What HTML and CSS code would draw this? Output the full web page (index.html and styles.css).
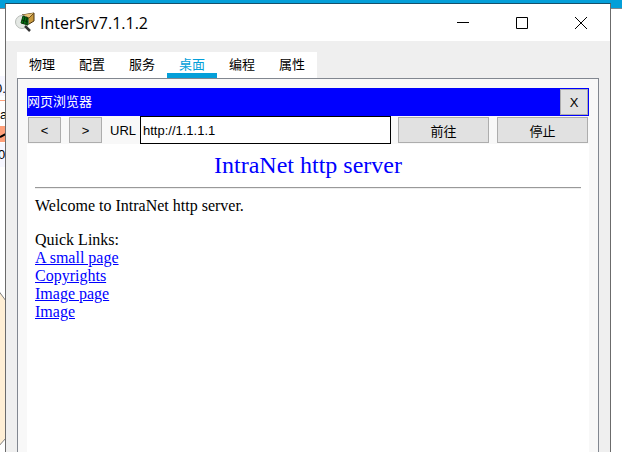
FILE: index.html
```html
<!DOCTYPE html>
<html lang="zh-CN">
<head>
<meta charset="utf-8">
<title>InterSrv7.1.1.2</title>
<link rel="stylesheet" href="styles.css">
</head>
<body>
<div class="desktop">
  <svg class="canvas" width="6" height="452" viewBox="0 0 6 452" aria-hidden="true">
    <path fill="#f7f7ff" d="M0 76h6v20H0zM0 143h6v24H0z"/>
    <path fill="#ffa07a" d="M0 100h6v1H0zM0 126h6v16H0z"/>
    <path d="M0 137l6-3" stroke="#000" stroke-width="2"/>
    <text class="node-label" x="-5" y="93">0.</text>
    <text class="node-label" x="0" y="119">a</text>
    <text class="node-label" x="-2" y="159">0</text>
    <path d="M-2 290L6 301V438L-2 447" fill="#ffefd5" stroke="#808080"/>
  </svg>
  <main class="window">
    <header class="titlebar">
      <svg class="app-icon" width="20" height="22" viewBox="0 0 20 22" aria-hidden="true">
        <path d="M7 3L19 1V9L14 12L7 10z" fill="#c99a3d" stroke="#4c3512"/>
        <path d="M7 3L14 6L19 1" fill="#e8c477" stroke="#70501f"/>
        <circle cx="7" cy="10" r="6.500" fill="#e4e8e4" stroke="#b8bcb8"/>
        <path d="M8 4L13 6V13L6 11z" fill="#087a16" stroke="#063b09"/>
        <path d="M10 5L8 12M12 6L11 12M7 8L13 10" stroke="#032b06"/>
        <path d="M10 14L15 19" stroke="#333" stroke-width="2.500"/>
      </svg>
      <h1 class="title">InterSrv7.1.1.2</h1>
      <div class="controls">
        <button class="control" aria-label="最小化"><svg width="12" height="12"><path d="M0 5.500h12"/></svg></button>
        <button class="control" aria-label="最大化"><svg width="12" height="12"><path d="M.5.500h11v11H.5z"/></svg></button>
        <button class="control" aria-label="关闭"><svg width="12" height="12"><path d="M0 0l12 12M12 0L0 12"/></svg></button>
      </div>
    </header>
    <nav class="tabs">
      <button class="tab">物理</button>
      <button class="tab">配置</button>
      <button class="tab">服务</button>
      <button class="tab active">桌面</button>
      <button class="tab">编程</button>
      <button class="tab">属性</button>
    </nav>
    <section class="panel">
      <div class="browser">
        <div class="browser-title">
          <h2 class="browser-name">网页浏览器</h2>
          <button class="btn close" aria-label="关闭浏览器">X</button>
        </div>
        <form class="toolbar">
          <button class="btn step" type="button">&lt;</button>
          <button class="btn step" type="button">&gt;</button>
          <div class="address">
            <label class="url-label" for="url">URL</label>
            <input class="url" id="url" type="text" value="http://1.1.1.1">
          </div>
          <button class="btn action" type="button">前往</button>
          <button class="btn action" type="button">停止</button>
        </form>
        <article class="page">
          <h3 class="page-title">IntraNet http server</h3>
          <hr class="rule">
          <p class="text">Welcome to IntraNet http server.</p>
          <p class="text">Quick Links:<br>
            <a href="#small">A small page</a><br>
            <a href="#copyrights">Copyrights</a><br>
            <a href="#image-page">Image page</a><br>
            <a href="#image">Image</a></p>
        </article>
      </div>
    </section>
  </main>
</div>
</body>
</html>
```
FILE: styles.css
```css
* { box-sizing: border-box; }

body {
  margin: 0;
  font-family: "Liberation Sans", "Noto Sans CJK SC", sans-serif;
  font-size: 13px;
  color: #000;
}

button, input { font: inherit; color: inherit; border-radius: 0; }

.desktop {
  position: relative;
  display: flex;
  height: 100vh;
  padding: 3px 11px 0 5px;
  overflow: hidden;
  background: linear-gradient(#049fd9 8px, #808890 8px, #808890 9px, #fff 9px);
}

.canvas { position: absolute; left: 0; top: 0; }
.node-label { font-size: 13px; }

.window {
  position: relative;
  flex: 1;
  min-width: 0;
  display: flex;
  flex-direction: column;
  background: #efefef;
  border: 1px solid #6b6b6b;
  border-top-color: #17506a;
  border-bottom: 0;
}

.titlebar {
  display: flex;
  align-items: center;
  height: 37px;
  padding-left: 9px;
  background: #fff;
}

.app-icon { flex: none; }

.title {
  flex: 1;
  margin: 0 0 0 5px;
  font: 16px/24px "Open Sans", "Noto Sans", sans-serif;
}

.controls { display: flex; }

.control {
  display: flex;
  align-items: center;
  justify-content: center;
  width: 59px;
  height: 36px;
  padding: 0;
  border: 0;
  background: none;
}

.control svg { fill: none; stroke: #000; }

.tabs { display: flex; margin: 11px 0 0 11px; }

.tab {
  width: 50px;
  height: 26px;
  padding: 4px 0 0;
  border: 0;
  border-bottom: 5px solid #fff;
  background: #fff;
  line-height: 17px;
}

.tab.active { color: #049fd9; border-bottom-color: #049fd9; }

.panel {
  flex: 1;
  display: flex;
  margin: 0 11px;
  padding: 9px 9px 0;
  background: #f8f8f8;
  border: 1px solid #828790;
  border-bottom: 0;
}

.browser { flex: 1; min-width: 0; display: flex; flex-direction: column; }

.browser-title {
  display: flex;
  align-items: center;
  height: 28px;
  padding: 1px 1px 1px 0;
  background: #00f;
}

.browser-name { flex: 1; margin: 0; font-size: 13px; line-height: 22px; font-weight: 400; color: #fff; }

.btn {
  height: 26px;
  padding: 0;
  background: #e1e1e1;
  border: 1px solid #adadad;
}

.close { width: 28px; }

.toolbar { display: flex; align-items: center; gap: 8px; height: 28px; padding: 0 1px; }
.step { width: 33px; }
.address { flex: 1; min-width: 0; display: flex; align-items: center; margin-right: -1px; }
.url-label { width: 30px; }
.url { flex: 1; min-width: 0; height: 28px; padding: 0 2px; background: #fff; border: 1px solid #000; }
.action { width: 91px; }

.page {
  flex: 1;
  padding: 8px 8px 0;
  background: #fff;
  font-family: "Liberation Serif", serif;
  font-size: 16px;
  line-height: 18px;
}

.page-title { margin: 0; font-size: 24px; line-height: 27px; font-weight: 400; text-align: center; color: #00f; }
.rule { margin: 8px 0; border: 0; border-top: 1px solid #999; border-bottom: 1px solid #eee; }
.text { margin: 0 0 16px; }
.text a { color: #00f; }
```
